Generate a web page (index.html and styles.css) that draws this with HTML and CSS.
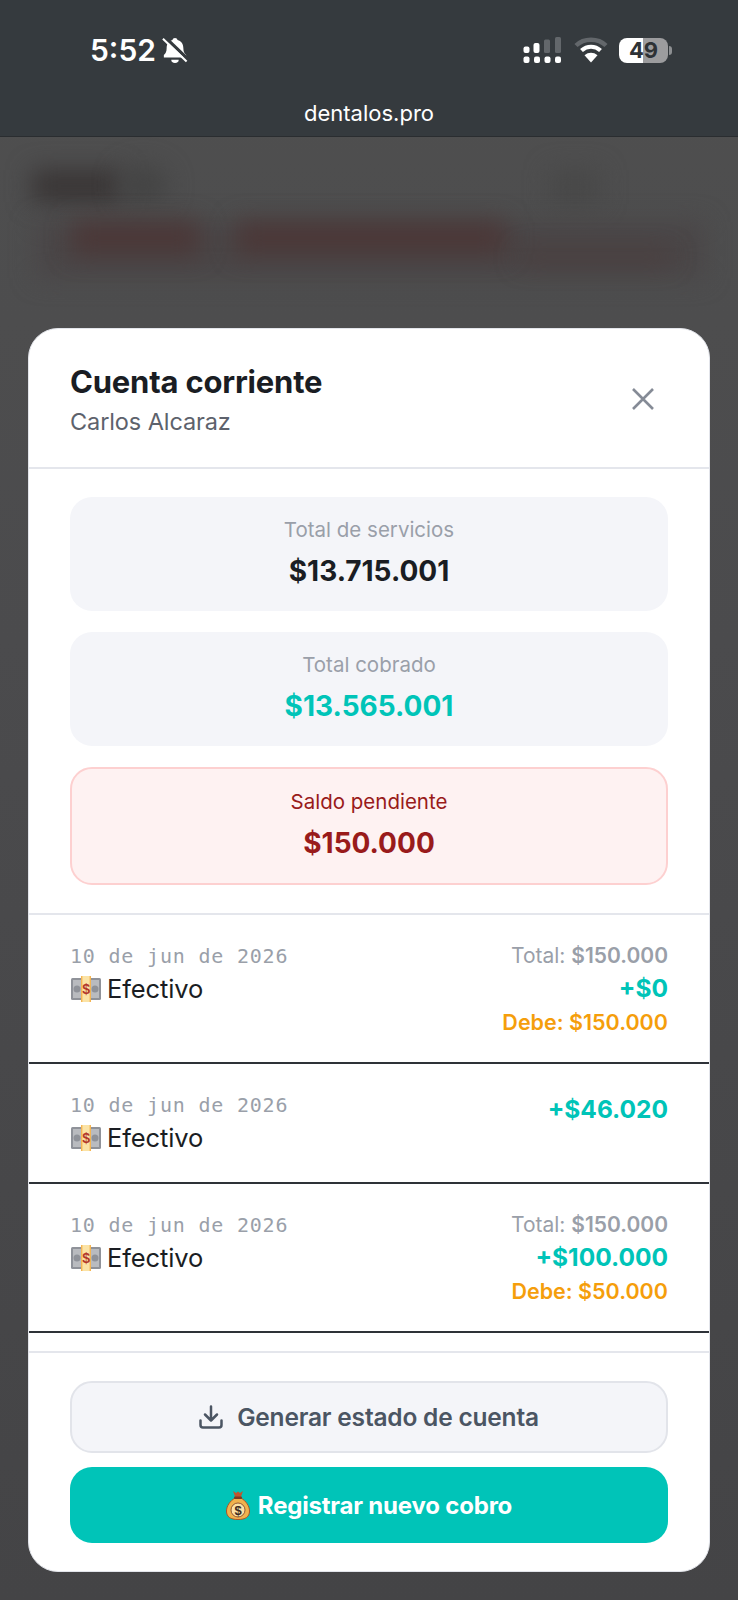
FILE: index.html
```html
<!DOCTYPE html>
<html lang="es">
<head>
    <meta charset="UTF-8">
    <meta name="viewport" content="width=device-width, initial-scale=1.0">
    <title>Cuenta corriente - dentalos.pro</title>
    <link rel="stylesheet" href="styles.css">
</head>
<body>
    <div class="screen">
        <div class="topbar">
            <div class="status-row">
                <div class="status-left">
                    <span class="clock">5:52</span>
                    <svg class="bell" width="28" height="28" viewBox="0 0 28 28">
                        <path d="M14 1c1.500 0 2.500 1 2.700 2.200 4 1 6.300 4.300 6.300 8.800 0 3.500 1 5.500 3 7.500v2.500H2v-2.500c2-2 3-4 3-7.500 0-4.500 2.300-7.800 6.300-8.800C11.500 2 12.500 1 14 1z" fill="#fff"/>
                        <path d="M10 24.500a4 3.400 0 0 0 8 0z" fill="#fff"/>
                        <path d="M3 0L28 24" stroke="#353a3e" stroke-width="3.500"/>
                        <path d="M1 2L26.500 26.500" stroke="#fff" stroke-width="2.200"/>
                    </svg>
                </div>
                <div class="status-right">
                    <svg width="40" height="27" viewBox="0 0 40 27">
                        <rect x="0.500" y="9.500" width="6" height="6.500" rx="2" fill="#fff"/>
                        <rect x="10.500" y="6" width="6" height="10" rx="2" fill="#fff"/>
                        <rect x="21" y="2.500" width="6" height="13.500" rx="1.500" fill="#63676b"/>
                        <rect x="32" y="0" width="6" height="16" rx="1.500" fill="#63676b"/>
                        <rect x="0.500" y="19.500" width="6" height="6.500" rx="2" fill="#fff"/>
                        <rect x="11" y="19.500" width="6" height="6.500" rx="2" fill="#fff"/>
                        <rect x="21.500" y="19.500" width="6" height="6.500" rx="2" fill="#fff"/>
                        <rect x="32" y="19.500" width="6" height="6.500" rx="2" fill="#fff"/>
                    </svg>
                    <svg width="34" height="26" viewBox="0 0 34 26">
                        <path d="M2 8.500C10 .8 24 .8 32 8.500" fill="none" stroke="#63676b" stroke-width="4.500"/>
                        <path d="M7.500 13.500c5.500-5 13.500-5 19 0" fill="none" stroke="#fff" stroke-width="4.200"/>
                        <path d="M10.500 18.200c3.800-3.300 9.200-3.300 13 0L17 25.500z" fill="#fff"/>
                    </svg>
                    <div class="battery">
                        <div class="battery-body"><span>49</span></div>
                        <div class="battery-tip"></div>
                    </div>
                </div>
            </div>
            <div class="url">dentalos.pro</div>
        </div>

        <div class="backdrop">
            <div class="blob blob-logo"></div>
            <div class="blob blob-dot"></div>
            <div class="blob blob-icon"></div>
            <div class="blob blob-alert"></div>
            <div class="blob blob-red-a"></div>
            <div class="blob blob-red-b"></div>
            <div class="blob blob-red-c"></div>
        </div>

        <div class="modal">
            <div class="modal-header">
                <div>
                    <h2 class="modal-title">Cuenta corriente</h2>
                    <div class="modal-sub">Carlos Alcaraz</div>
                </div>
                <svg class="close-icon" width="24" height="24" viewBox="0 0 24 24">
                    <path d="M2 2L22 22M22 2L2 22" stroke="#858b96" stroke-width="2.600" fill="none"/>
                </svg>
            </div>

            <div class="summary">
                <div class="stat">
                    <div class="stat-label">Total de servicios</div>
                    <div class="stat-value">$13.715.001</div>
                </div>
                <div class="stat">
                    <div class="stat-label">Total cobrado</div>
                    <div class="stat-value teal">$13.565.001</div>
                </div>
                <div class="stat stat-due">
                    <div class="stat-label">Saldo pendiente</div>
                    <div class="stat-value">$150.000</div>
                </div>
            </div>

            <div class="payments">
                <div class="payment">
                    <div>
                        <div class="payment-date">10 de jun de 2026</div>
                        <div class="payment-method">
                            <svg width="30" height="26" viewBox="0 0 30 26">
                                <rect x="0" y="2" width="30" height="22" rx="1.500" fill="#8f9299"/>
                                <rect x="2" y="4" width="26" height="18" fill="#b9bbbf"/>
                                <circle cx="6" cy="13" r="3.500" fill="#8f9299"/>
                                <circle cx="24" cy="13" r="3.500" fill="#8f9299"/>
                                <rect x="10" y="0" width="10" height="26" fill="#fbe3a6"/>
                                <rect x="10" y="0" width="1.400" height="26" fill="#f6b552"/>
                                <rect x="18.600" y="0" width="1.400" height="26" fill="#f6b552"/>
                                <text x="15" y="18" class="bill-sign">$</text>
                            </svg>
                            Efectivo
                        </div>
                    </div>
                    <div class="payment-amounts">
                        <div class="amount-total">Total: <b>$150.000</b></div>
                        <div class="amount-paid">+$0</div>
                        <div class="amount-due">Debe: $150.000</div>
                    </div>
                </div>
                <div class="payment payment-short">
                    <div>
                        <div class="payment-date">10 de jun de 2026</div>
                        <div class="payment-method">
                            <svg width="30" height="26" viewBox="0 0 30 26">
                                <rect x="0" y="2" width="30" height="22" rx="1.500" fill="#8f9299"/>
                                <rect x="2" y="4" width="26" height="18" fill="#b9bbbf"/>
                                <circle cx="6" cy="13" r="3.500" fill="#8f9299"/>
                                <circle cx="24" cy="13" r="3.500" fill="#8f9299"/>
                                <rect x="10" y="0" width="10" height="26" fill="#fbe3a6"/>
                                <rect x="10" y="0" width="1.400" height="26" fill="#f6b552"/>
                                <rect x="18.600" y="0" width="1.400" height="26" fill="#f6b552"/>
                                <text x="15" y="18" class="bill-sign">$</text>
                            </svg>
                            Efectivo
                        </div>
                    </div>
                    <div class="payment-amounts">
                        <div class="amount-paid">+$46.020</div>
                    </div>
                </div>
                <div class="payment">
                    <div>
                        <div class="payment-date">10 de jun de 2026</div>
                        <div class="payment-method">
                            <svg width="30" height="26" viewBox="0 0 30 26">
                                <rect x="0" y="2" width="30" height="22" rx="1.500" fill="#8f9299"/>
                                <rect x="2" y="4" width="26" height="18" fill="#b9bbbf"/>
                                <circle cx="6" cy="13" r="3.500" fill="#8f9299"/>
                                <circle cx="24" cy="13" r="3.500" fill="#8f9299"/>
                                <rect x="10" y="0" width="10" height="26" fill="#fbe3a6"/>
                                <rect x="10" y="0" width="1.400" height="26" fill="#f6b552"/>
                                <rect x="18.600" y="0" width="1.400" height="26" fill="#f6b552"/>
                                <text x="15" y="18" class="bill-sign">$</text>
                            </svg>
                            Efectivo
                        </div>
                    </div>
                    <div class="payment-amounts">
                        <div class="amount-total">Total: <b>$150.000</b></div>
                        <div class="amount-paid">+$100.000</div>
                        <div class="amount-due">Debe: $50.000</div>
                    </div>
                </div>
            </div>

            <div class="modal-footer">
                <button class="btn btn-light">
                    <svg width="24" height="24" viewBox="0 0 24 24" fill="none" stroke="#4b5563" stroke-width="2.500" stroke-linecap="round" stroke-linejoin="round">
                        <path d="M12 1.500V15M6 9.500l6 6 6-6"/>
                        <path d="M1.500 15.500V20a2.500 2.500 0 0 0 2.500 2.500h16a2.500 2.500 0 0 0 2.500-2.500v-4.500"/>
                    </svg>
                    Generar estado de cuenta
                </button>
                <button class="btn btn-primary">
                    <svg width="24" height="30" viewBox="0 0 24 30">
                        <path d="M7 1l3 2 2-1.500L14 3l3-2-2.500 7h-5z" fill="#c0562d"/>
                        <path d="M9 8h6c5 3 8.500 8 8.500 13 0 6-4 8.500-11.500 8.500S.5 27 .5 21C.5 16 4 11 9 8z" fill="#f0b24d" stroke="#a8552a" stroke-width="1"/>
                        <rect x="8" y="6.500" width="8" height="2.500" rx="1" fill="#7a3b22"/>
                        <circle cx="12" cy="20" r="7" fill="#fbe1a4" stroke="#7a3b22" stroke-width="0.800"/>
                        <text x="12" y="24.500" class="bag-sign">$</text>
                    </svg>
                    Registrar nuevo cobro
                </button>
            </div>
        </div>
    </div>
</body>
</html>
```

FILE: styles.css
```css
:root {
    --teal: #00c4b8;
    --ink: #1a1d23;
    --muted: #9a9fa9;
    --panel: #f4f5f9;
    --line: #e4e6ec;
    --row-line: #2e3238;
}

* { box-sizing: border-box; margin: 0; padding: 0; }

body {
    font-family: Inter, "Liberation Sans", sans-serif;
    background: #444;
    color: var(--ink);
}

.bill-sign {
    font-family: "Liberation Sans", sans-serif;
    font-size: 14px;
    font-weight: 700;
    fill: #b3372a;
    text-anchor: middle;
}

.bag-sign {
    font-family: "Liberation Sans", sans-serif;
    font-size: 13px;
    font-weight: 700;
    fill: #3b2a20;
    text-anchor: middle;
}

.screen {
    position: relative;
    width: 738px;
    height: 1600px;
    overflow: hidden;
    background: linear-gradient(#4f4f4f, #4b4b4d 40%, #444446);
}

/* browser chrome */
.topbar {
    height: 137px;
    background: #353a3e;
    border-bottom: 1px solid #2a2d30;
    color: #fff;
    padding-top: 34px;
}

.status-row {
    display: flex;
    justify-content: space-between;
    align-items: center;
    padding: 0 66px 0 90px;
    height: 32px;
}

.status-left {
    display: flex;
    align-items: center;
    gap: 6px;
}

.clock {
    font-size: 30px;
    font-weight: 600;
}

.bell {
    width: 26px;
    height: 26px;
}

.status-right {
    display: flex;
    align-items: center;
    gap: 11px;
}

.battery {
    display: flex;
    align-items: center;
    gap: 1px;
}

.battery-body {
    width: 49px;
    height: 25px;
    border-radius: 8px;
    background: linear-gradient(90deg, #fff 50%, #9c9c9e 50%);
    color: #2e3236;
    font-size: 22px;
    font-weight: 700;
    line-height: 25px;
    text-align: center;
}

.battery-tip {
    width: 3px;
    height: 9px;
    border-radius: 0 3px 3px 0;
    background: #8d8f92;
}

.url {
    margin-top: 33px;
    text-align: center;
    font-size: 22px;
    line-height: 28px;
}

/* blurred page behind the modal */
.backdrop {
    height: 192px;
}

.blob {
    position: absolute;
    filter: blur(12px);
}

.blob-logo { left: 32px; top: 170px; width: 90px; height: 32px; background: #393535; }
.blob-dot { left: 118px; top: 165px; width: 50px; height: 40px; border-radius: 50%; background: #444; }
.blob-icon { left: 550px; top: 170px; width: 50px; height: 34px; background: #484848; }
.blob-alert { left: 36px; top: 222px; width: 668px; height: 56px; background: #4a4647; }
.blob-red-a { left: 72px; top: 222px; width: 128px; height: 32px; background: #4b3737; }
.blob-red-b { left: 236px; top: 222px; width: 270px; height: 32px; background: #4b3737; }
.blob-red-c { left: 520px; top: 252px; width: 150px; height: 10px; background: #4b3b3b; }

/* modal */
.modal {
    position: absolute;
    left: 28px;
    top: 328px;
    width: 682px;
    height: 1244px;
    background: #fff;
    border: 1px solid #e2e4ea;
    border-radius: 30px;
    display: flex;
    flex-direction: column;
    overflow: hidden;
}

.modal-header {
    height: 140px;
    flex-shrink: 0;
    padding: 0 41px;
    display: flex;
    justify-content: space-between;
    align-items: center;
    border-bottom: 2px solid var(--line);
}

.modal-title {
    margin-top: 3px;
    font-size: 31px;
    font-weight: 700;
    line-height: 40px;
    letter-spacing: -0.2px;
}

.modal-sub {
    margin-top: 4px;
    font-size: 23.500px;
    line-height: 32px;
    color: #5d626c;
    letter-spacing: -0.1px;
}

.close-icon { margin-right: 13px; margin-top: 2px; }

.summary {
    flex-shrink: 0;
    padding: 28px 41px;
    display: flex;
    flex-direction: column;
    gap: 21px;
    border-bottom: 2px solid var(--line);
}

.stat {
    height: 114px;
    background: var(--panel);
    border-radius: 22px;
    text-align: center;
    padding-top: 19px;
}

.stat-label {
    font-size: 20.500px;
    line-height: 28px;
    color: var(--muted);
}

.stat-value {
    margin-top: 8px;
    font-size: 28px;
    font-weight: 700;
    line-height: 38px;
}

.stat-value.teal { color: var(--teal); }

.stat-due {
    height: 118px;
    background: #fef2f2;
    border: 2px solid #fdd0d0;
}

.stat-due .stat-label,
.stat-due .stat-value { color: #991b1b; }

.payments {
    flex: 1;
    overflow: hidden;
}

.payment {
    height: 149px;
    padding: 27px 41px 0;
    display: flex;
    justify-content: space-between;
    border-bottom: 2px solid var(--row-line);
}

.payment-short { height: 120px; }

.payment-date {
    font-family: "DejaVu Sans Mono", "Liberation Mono", monospace;
    font-size: 20px;
    line-height: 28px;
    color: var(--muted);
    letter-spacing: 0.8px;
}

.payment-method {
    display: flex;
    align-items: center;
    gap: 6px;
    margin-top: 3px;
    font-size: 25.500px;
    line-height: 32px;
    letter-spacing: -0.1px;
}

.payment-method svg { margin-left: 1px; }

.payment-amounts {
    text-align: right;
}

.amount-total {
    font-size: 21px;
    line-height: 28px;
    color: var(--muted);
}

.amount-total b { font-weight: 600; }

.amount-paid {
    margin-top: 1px;
    font-size: 24.500px;
    font-weight: 700;
    line-height: 34px;
    color: var(--teal);
}

.amount-due {
    margin-top: 3px;
    font-size: 21.500px;
    font-weight: 600;
    line-height: 28px;
    color: #f59e0b;
}

.modal-footer {
    flex-shrink: 0;
    padding: 28px 41px;
    display: flex;
    flex-direction: column;
    gap: 14px;
    border-top: 2px solid var(--line);
}

.btn {
    display: flex;
    align-items: center;
    justify-content: center;
    font-family: inherit;
    font-size: 24.500px;
    font-weight: 600;
    letter-spacing: -0.2px;
}

.btn-light {
    height: 72px;
    gap: 14px;
    background: var(--panel);
    border: 2px solid #e2e4ea;
    border-radius: 22px;
    color: #4b5563;
}

.btn-primary {
    height: 76px;
    gap: 8px;
    background: var(--teal);
    border: none;
    border-radius: 22px;
    color: #fff;
    font-size: 24px;
    font-weight: 700;
}
```
